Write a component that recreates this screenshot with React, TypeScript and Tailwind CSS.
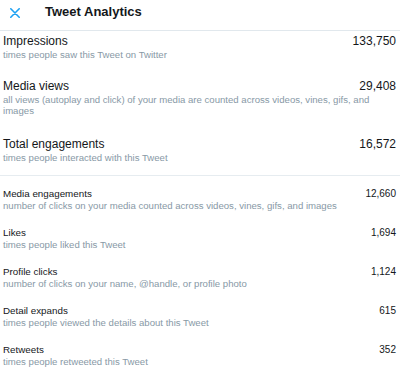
const topStats = [
  {
    title: "Impressions",
    value: "133,750",
    desc: "times people saw this Tweet on Twitter",
    pad: "pt-[3px] pb-[19px]",
  },
  {
    title: "Media views",
    value: "29,408",
    desc: "all views (autoplay and click) of your media are counted across videos, vines, gifs, and images",
    pad: "pb-[21px]",
  },
  {
    title: "Total engagements",
    value: "16,572",
    desc: "times people interacted with this Tweet",
    pad: "pb-[12px]",
  },
]

const engagements = [
  {
    title: "Media engagements",
    value: "12,660",
    desc: "number of clicks on your media counted across videos, vines, gifs, and images",
  },
  { title: "Likes", value: "1,694", desc: "times people liked this Tweet" },
  {
    title: "Profile clicks",
    value: "1,124",
    desc: "number of clicks on your name, @handle, or profile photo",
  },
  {
    title: "Detail expands",
    value: "615",
    desc: "times people viewed the details about this Tweet",
  },
  { title: "Retweets", value: "352", desc: "times people retweeted this Tweet" },
]

export default function App() {
  return (
    <div className="w-[400px] h-[371px] bg-white overflow-hidden font-['Liberation_Sans',Arial,sans-serif] text-[#14171a]">
      {/* header */}
      <div className="h-[31px] border-b border-[#e1e8ed] flex items-center pb-[6px]">
        <button className="ml-[10px] mt-[1px] w-[10px] h-[10px] flex items-center justify-center">
          <svg width="10" height="10" viewBox="0 0 10 10" fill="none">
            <path d="M0.8 0.8L9.2 9.2M9.2 0.8L0.8 9.2" stroke="#1da1f2" strokeWidth="1.6" strokeLinecap="round" />
          </svg>
        </button>
        <h1 className="ml-[25px] text-[13px] leading-[16px] font-bold">Tweet Analytics</h1>
      </div>

      {/* main stats */}
      <div className="pl-[3px] pr-[4px]">
        {topStats.map((s) => (
          <div key={s.title} className={s.pad}>
            <div className="flex justify-between items-start">
              <span className="text-[12px] leading-[15px]">{s.title}</span>
              <span className="text-[12px] leading-[15px]">{s.value}</span>
            </div>
            <p className="text-[9.6px] leading-[11px] text-[#8899a6]">{s.desc}</p>
          </div>
        ))}
      </div>

      <div className="h-px bg-[#e6ecf0]" />

      {/* engagement breakdown */}
      <div className="pl-[3px] pr-[4px] pt-[12px] flex flex-col gap-[16px]">
        {engagements.map((s) => (
          <div key={s.title}>
            <div className="flex justify-between items-start">
              <span className="text-[9.8px] leading-[12px]">{s.title}</span>
              <span className="text-[10px] leading-[12px]">{s.value}</span>
            </div>
            <p className="text-[9.6px] leading-[11px] text-[#8899a6]">{s.desc}</p>
          </div>
        ))}
      </div>
    </div>
  )
}
